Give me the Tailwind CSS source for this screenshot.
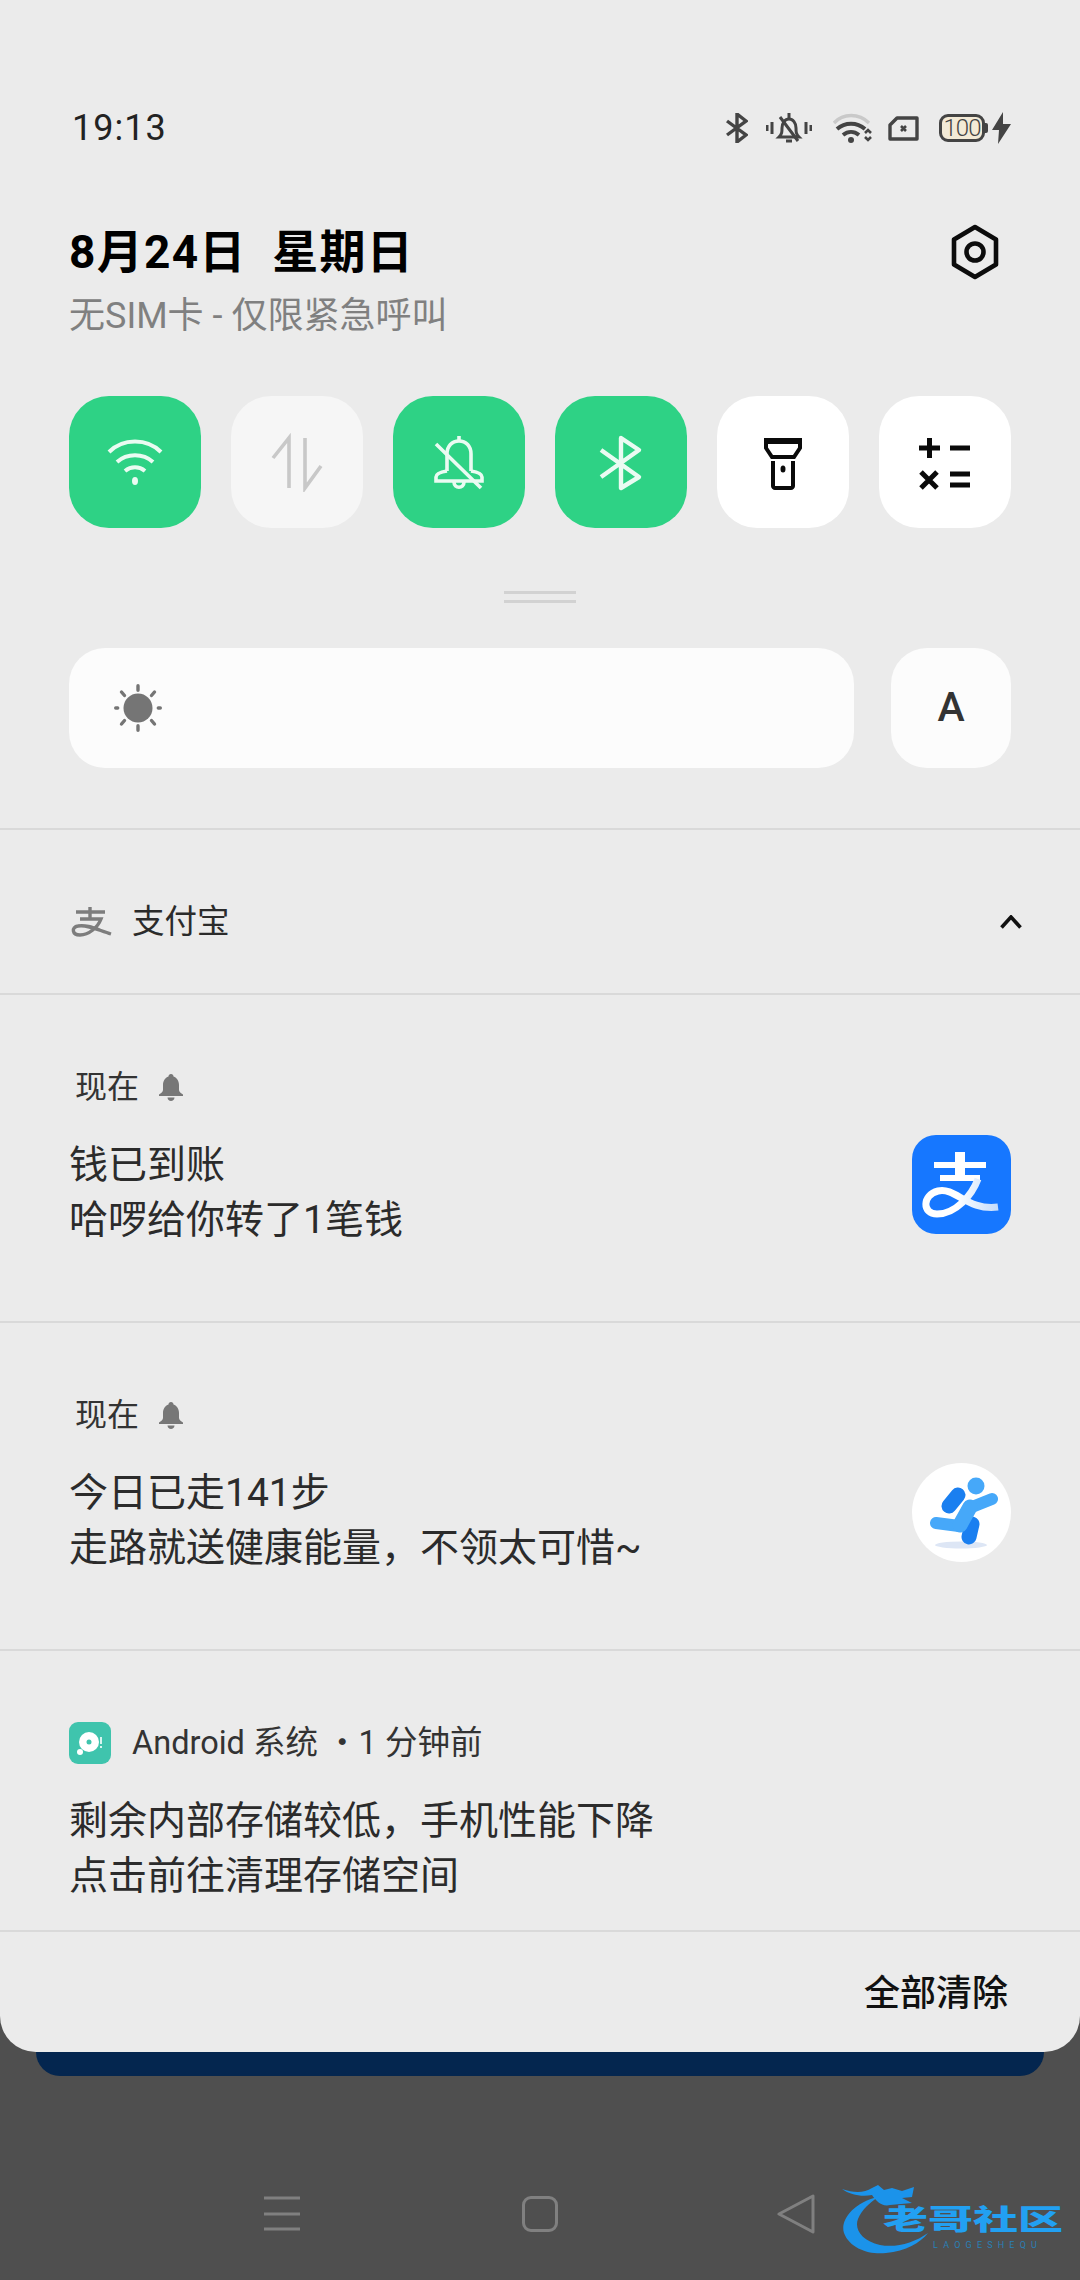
<!DOCTYPE html>
<html lang="zh">
<head>
<meta charset="utf-8">
<script src="https://cdn.jsdelivr.net/npm/@tailwindcss/browser@4"></script>
</head>
<body class="relative w-[1080px] h-[2280px] overflow-hidden bg-[#4f4f4f] [font-family:Roboto,'Noto_Sans_CJK_SC',sans-serif]">
<div class="flex flex-col h-[2052px] rounded-b-[36px] bg-[#ebebeb]">
  <!-- status bar -->
  <div class="flex items-center h-[60px] mt-[98px] pl-[72px] pr-[69px]">
    <span class="text-[36px] leading-[60px] tracking-[1px] text-[#222]">19:13</span>
    <div class="ml-auto flex items-center">
      <svg width="22" height="30" viewBox="0 0 22 30" fill="none" stroke="#444" stroke-width="3.4"><path d="M1 8l19 14-9 7V1l9 7L1 22"/></svg>
      <svg class="ml-[18px]" width="46" height="32" viewBox="0 0 46 32" fill="none" stroke="#444" stroke-width="3"><path d="M1 13v6M6 10v12M40 10v12M45 13v6"/><path d="M13 25h20c-3-3-3-5-3-9 0-5-3-9-7-9s-7 4-7 9c0 4 0 6-3 9z"/><path d="M23 1v5M20 29h6M14 5l18 24"/></svg>
      <svg class="ml-[21px]" width="40" height="30" viewBox="0 0 40 30" fill="none"><path d="M1 10C10 0 26 0 36 10" stroke="#c9c9c9" stroke-width="3.4"/><path d="M4 16C12 9 24 9 32 16M10 22c5-4 11-4 16 0" stroke="#444" stroke-width="4"/><circle cx="18" cy="27" r="3" fill="#444"/><path d="M32 20l3-3 3 3M32 24l3 3 3-3" stroke="#444" stroke-width="2.6"/></svg>
      <svg class="ml-[15px]" width="31" height="25" viewBox="0 0 31 25" fill="none"><path d="M9 2h20v21H2V9z" stroke="#444" stroke-width="3.400" stroke-linejoin="round"/><path d="M13 10l5 5M18 10l-5 5" stroke="#444" stroke-width="2.6"/></svg>
      <div class="ml-[20px] relative flex items-center justify-center w-[46px] h-[28px] rounded-[9px] border-[3px] border-[#444] bg-[#f3ead6] text-[24px] leading-none text-[#444] font-light tracking-[-1px]">100<span class="absolute right-[-6px] w-[3px] h-[10px] rounded-r-[2px] bg-[#444]"></span></div>
      <svg class="ml-[7px]" width="19" height="32" viewBox="0 0 19 32" fill="#444"><path d="M11 0L0 18h7l-1 14L19 12h-8z"/></svg>
    </div>
  </div>
  <!-- date -->
  <div class="flex items-center justify-between h-[60px] mt-[64px] pl-[69px] pr-[69px]">
    <span class="text-[46px] leading-[60px] font-bold text-black whitespace-pre tracking-[1.300px]">8月24日  星期日</span>
    <svg width="60" height="60" class="mr-[6px]" viewBox="0 0 60 60" fill="none" stroke="#0c0c0c" stroke-width="4.6"><path d="M30 5l21 12.5v25L30 55 9 42.500v-25z" stroke-linejoin="round"/><circle cx="30" cy="30" r="8.500"/></svg>
  </div>
  <div class="h-[50px] mt-[9px] px-[69px] text-[36px] leading-[50px] text-[#808080]">无SIM卡 - 仅限紧急呼叫</div>
  <!-- tiles -->
  <div class="flex gap-[30px] mt-[55px] px-[69px]">
    <div class="flex items-center justify-center w-[132px] h-[132px] rounded-[40px] bg-[#2ed285]">
      <svg width="60" height="60" viewBox="0 0 60 60" fill="none" stroke="#eafbf2" stroke-width="4"><path d="M4 20C18 6 42 6 56 20M12 30c10-9 26-9 36 0M20 39c6-5 14-5 20 0"/><ellipse cx="30" cy="49" rx="3" ry="4" fill="#eafbf2" stroke="none"/></svg>
    </div>
    <div class="flex items-center justify-center w-[132px] h-[132px] rounded-[40px] bg-[#f6f6f6]">
      <svg width="60" height="60" viewBox="0 0 60 60" fill="none" stroke="#c8c8c8" stroke-width="3.6"><path d="M6 26L22 6v50M54 34L38 56V6"/></svg>
    </div>
    <div class="flex items-center justify-center w-[132px] h-[132px] rounded-[40px] bg-[#2ed285]">
      <svg width="60" height="60" viewBox="0 0 60 60" fill="none" stroke="#eafbf2" stroke-width="3.6"><path d="M18 39V22c0-8 5-13 12-13s12 5 12 13v17"/><path d="M18 39c-6 1-11 3-11 6v4h46v-4c0-3-5-5-11-6"/><path d="M30 4v5M25 50c0 7 10 7 10 0M7 12l45 44"/></svg>
    </div>
    <div class="flex items-center justify-center w-[132px] h-[132px] rounded-[40px] bg-[#2ed285]">
      <svg width="60" height="60" viewBox="0 0 60 60" fill="none" stroke="#eafbf2" stroke-width="4.400"><path d="M10 18l38 27-18 11V6l18 12-38 27" stroke-linejoin="round"/></svg>
    </div>
    <div class="flex items-center justify-center w-[132px] h-[132px] rounded-[40px] bg-white">
      <svg width="60" height="60" viewBox="0 0 60 60" fill="none" stroke="#0a0a0a" stroke-width="4"><path d="M13 8h34v8l-6 9H19l-6-9z"/><path d="M12 9h36" stroke-width="6"/><path d="M20 29v25c0 1 1 2 2 2h16c1 0 2-1 2-2V29"/><ellipse cx="30" cy="37" rx="2.500" ry="3.500" fill="#0a0a0a" stroke="none"/></svg>
    </div>
    <div class="flex items-center justify-center w-[132px] h-[132px] rounded-[40px] bg-white">
      <svg width="60" height="60" viewBox="0 0 60 60" fill="none" stroke="#0a0a0a" stroke-width="5"><path d="M4 16h21M14.500 6v20M35 16h20M6 40l16 16M22 40L6 56M35 42h20M35 53h20"/></svg>
    </div>
  </div>
  <!-- pull handle -->
  <div class="flex flex-col gap-[6px] items-center mt-[63px]">
    <div class="w-[72px] h-[3px] bg-[#d2d2d2]"></div>
    <div class="w-[72px] h-[3px] bg-[#d2d2d2]"></div>
  </div>
  <!-- brightness -->
  <div class="flex justify-between mt-[45px] px-[69px]">
    <div class="flex items-center w-[785px] h-[120px] rounded-[36px] bg-[#fcfcfc] pl-[45px]">
      <svg width="48" height="48" viewBox="0 0 48 48" fill="#757575"><circle cx="24" cy="24" r="14.500"/><g stroke="#757575" stroke-width="3.400" stroke-linecap="round"><path d="M24 1.700v4.600M24 41.700v4.600M1.700 24h2M44.300 24h2M7.500 8l3 3.500M40.500 8l-3 3.500M7.500 40l3-3.500M40.500 40l-3-3.500"/></g></svg>
    </div>
    <div class="flex items-center justify-center w-[120px] h-[120px] rounded-[36px] bg-[#fcfcfc] text-[41px] font-medium text-[#333]">A</div>
  </div>
  <!-- app header -->
  <div class="flex items-center h-[167px] mt-[60px] pt-[20px] border-y-2 border-[#d9d9d9] pl-[71px] pr-[58px]">
    <svg width="41" height="30" viewBox="0 0 41 30" fill="none" stroke="#7d7d7d" stroke-width="3.400"><path d="M5 5h29M19 0v12M9 12h21c-3 8-12 16-21 16-8 0-9-8-2-9 9-2 20 4 33 8"/></svg>
    <span class="ml-[20px] text-[32.500px] leading-[44px] text-[#2b2b2b]">支付宝</span>
    <svg class="ml-auto" width="22" height="14" viewBox="0 0 22 14" fill="none" stroke="#111" stroke-width="3.600"><path d="M1.500 12.500L11 2l9.500 10.500"/></svg>
  </div>
  <!-- notification 1 -->
  <div class="flex justify-between h-[328px] border-b-2 border-[#d9d9d9] pl-[69px] pr-[69px]">
    <div class="pt-[70px]">
      <div class="flex items-center h-[44px] pl-[6px]">
        <span class="text-[32px] leading-[44px] text-[#333]">现在</span>
        <svg class="ml-[20px]" width="24" height="27" viewBox="0 0 24 27" fill="#777"><path d="M12 0c1.500 0 2.500 1 2.500 2.500C18 3.800 20 7 20 11v5c0 2 2 3 4 4.500V22H0v-1.500C2 19 4 18 4 16v-5c0-4 2-7.200 5.500-8.500C9.500 1 10.500 0 12 0zM8.500 23.500h7C15.500 28 8.500 28 8.500 23.500z"/></svg>
      </div>
      <div class="mt-[29px] text-[39px] leading-[55px] text-[#2b2b2b]">钱已到账<br>哈啰给你转了1笔钱</div>
    </div>
    <div class="relative w-[99px] h-[99px] mt-[140px] rounded-[24px] bg-[#1677ff]">
      <svg width="99" height="99" viewBox="0 0 99 99" fill="none"><defs><linearGradient id="ali" x1="45" x2="86" y1="70" y2="70" gradientUnits="userSpaceOnUse"><stop offset="0" stop-color="#fff"/><stop offset="1" stop-color="#c4dcfb"/></linearGradient></defs><path d="M22 30h52M28 43h40" stroke="#fff" stroke-width="6"/><path d="M48 17v26" stroke="#fff" stroke-width="10"/><path d="M66 44C60 60 44 79 25 79 10 79 10 60 26 56c18-4 29 20 60 16" stroke="url(#ali)" stroke-width="7"/></svg>
    </div>
  </div>
  <!-- notification 2 -->
  <div class="flex justify-between h-[328px] border-b-2 border-[#d9d9d9] pl-[69px] pr-[69px]">
    <div class="pt-[70px]">
      <div class="flex items-center h-[44px] pl-[6px]">
        <span class="text-[32px] leading-[44px] text-[#333]">现在</span>
        <svg class="ml-[20px]" width="24" height="27" viewBox="0 0 24 27" fill="#777"><path d="M12 0c1.500 0 2.500 1 2.500 2.500C18 3.800 20 7 20 11v5c0 2 2 3 4 4.500V22H0v-1.500C2 19 4 18 4 16v-5c0-4 2-7.200 5.500-8.500C9.500 1 10.500 0 12 0zM8.500 23.500h7C15.500 28 8.500 28 8.500 23.500z"/></svg>
      </div>
      <div class="mt-[29px] text-[39px] leading-[55px] text-[#2b2b2b]">今日已走141步<br>走路就送健康能量，不领太可惜~</div>
    </div>
    <div class="w-[99px] h-[99px] mt-[140px] rounded-full bg-white">
      <svg width="99" height="99" viewBox="0 0 99 99" fill="none" stroke-linecap="round" stroke-linejoin="round"><ellipse cx="49" cy="82" rx="26" ry="3.500" fill="#dde6f5"/><path d="M46 32L37 43M60 61l-3 13" stroke="#1a7ff0" stroke-width="15"/><circle cx="64" cy="23" r="8.500" fill="#46a8f9"/><path d="M80 36L60 44M47 63L24 60" stroke="#46a8f9" stroke-width="12"/><path d="M58 44L48 62" stroke="#46a8f9" stroke-width="15"/></svg>
    </div>
  </div>
  <!-- notification 3 -->
  <div class="flex flex-col h-[279px] pl-[69px] pr-[69px]">
    <div class="flex items-center h-[44px] mt-[70px]">
      <div class="relative w-[42px] h-[42px] rounded-[9px] bg-[#3fc4ad]">
        <svg width="42" height="42" viewBox="0 0 42 42" fill="none"><circle cx="20" cy="20" r="10" fill="#fff"/><circle cx="20" cy="20" r="2.500" fill="#3fc4ad"/><circle cx="11" cy="30" r="3" fill="#fff"/><path d="M32 15v7M32 24v2" stroke="#fff" stroke-width="1.600"/></svg>
      </div>
      <span class="ml-[21px] text-[32.500px] leading-[44px] text-[#333] whitespace-pre">Android 系统 ・1 分钟前</span>
    </div>
    <div class="mt-[29px] text-[39px] leading-[55px] text-[#2b2b2b]">剩余内部存储较低，手机性能下降<br>点击前往清理存储空间</div>
  </div>
  <!-- footer -->
  <div class="flex items-center justify-end flex-1 pt-[4px] border-t-2 border-[#d9d9d9] pr-[72px]">
    <span class="text-[36px] leading-[50px] font-medium text-[#111]">全部清除</span>
  </div>
</div>
<div class="mx-[36px] h-[24px] rounded-b-[24px] bg-[#04264f]"></div>
<!-- nav bar -->
<div class="flex items-center h-[40px] mt-[118px] pl-[264px]">
  <svg width="36" height="36" viewBox="0 0 36 36" stroke="#808080" stroke-width="3"><path d="M0 2h36M0 18h36M0 33h36"/></svg>
  <div class="ml-[222px] w-[36px] h-[36px] rounded-[9px] border-[3px] border-[#808080]"></div>
  <svg class="ml-[219px]" width="38" height="40" viewBox="0 0 38 40" fill="none" stroke="#808080" stroke-width="3" stroke-linejoin="round"><path d="M36 2v36L2 20z"/></svg>
</div>
<!-- watermark -->
<div class="absolute left-[842px] top-[2183px] w-[224px] h-[72px]">
  <svg class="absolute left-0 top-0" width="90" height="72" viewBox="0 0 90 72" fill="#1b93ea"><path d="M36 14C10 20-2 38 2 50c6 16 26 22 42 20 20-2 34-10 42-20-14 10-32 15-48 12C20 58 12 46 16 36c4-10 12-16 20-22z"/><path d="M0 6c12 4 22 4 30-1l6-3 6 5 8-2 10 3 12-4-2 10-10 1 10 5-22 2c-8 2-14-4-18-10C20 14 8 12 0 6z"/></svg>
  <span class="absolute left-[41px] top-[21px] scale-y-[0.62] text-[45px] leading-[34px] font-black text-[#22a0f2] whitespace-nowrap">老哥社区</span>
  <span class="absolute left-[91px] top-[58px] text-[9px] leading-[9px] tracking-[5.200px] text-[#2a7fb5] whitespace-nowrap">LAOGESHEQU</span>
</div>
</body>
</html>
